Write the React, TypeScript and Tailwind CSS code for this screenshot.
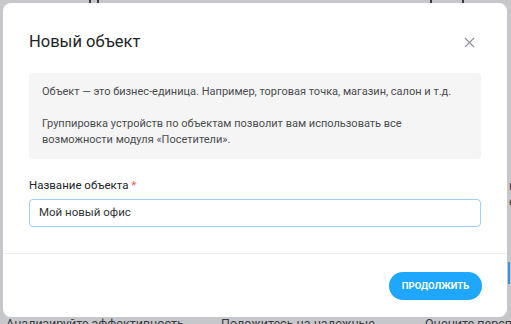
import { X } from "lucide-react";

export default function App() {
  return (
    <div
      className="relative w-[511px] h-[324px] overflow-hidden bg-[#c6c7cb]"
      style={{ fontFamily: "Roboto, 'Noto Sans', sans-serif" }}
    >
      {/* page behind the dimmed overlay */}
      <div className="absolute left-[89px] top-0 w-[2px] h-[4px] bg-[#3a3b3e]" />
      <div className="absolute left-[97px] top-0 w-[2px] h-[4px] bg-[#3a3b3e]" />
      <div className="absolute left-[430px] top-0 w-[2px] h-[4px] bg-[#3a3b3e]" />
      <div className="absolute left-[462px] top-0 w-[2px] h-[4px] bg-[#3a3b3e]" />
      <div className="absolute left-[509px] top-[178px] text-[12px] leading-[16px] text-[#3a3b3e]">
        н<br />е
      </div>
      <div className="absolute left-[508px] top-[262px] w-[6px] h-[22px] border-l-2 border-[#3d8fd6]" />
      <div className="absolute top-[316px] left-0 w-full text-[12.5px] leading-[16px] text-[#3a3b3e] whitespace-nowrap">
        <span className="absolute left-[6px]">Анализируйте эффективность</span>
        <span className="absolute left-[221px]">Положитесь на надежные</span>
        <span className="absolute left-[425px]">Оцените перспек</span>
      </div>

      {/* dialog */}
      <div className="absolute left-[3px] top-[3px] w-[504px] h-[314px] bg-white rounded-[8px] flex flex-col">
        <div className="flex items-center justify-between pl-[26px] pr-[29px] pt-[27px]">
          <h2 className="text-[16.5px] leading-[24px] font-normal text-[#222428]">Новый объект</h2>
          <X className="w-[17px] h-[17px] text-[#8b9099]" strokeWidth={1.5} />
        </div>

        <div className="mx-[26px] mt-[19px] rounded-[4px] bg-[#f5f5f5] px-[13px] py-[11px] text-[11px] leading-[16px] text-[#4a4c50]">
          Объект — это бизнес-единица. Например, торговая точка, магазин, салон и т.д.
          <br />
          <br />
          Группировка устройств по объектам позволит вам использовать все
          <br />
          возможности модуля «Посетители».
        </div>

        <div className="mx-[26px] mt-[18px] text-[11.5px] leading-[16px] text-[#222428]">
          Название объекта <span className="text-[#f0564c]">*</span>
        </div>
        <div className="mx-[26px] mt-[6px] h-[28px] rounded-[4px] border border-[#9fcdf5] flex items-center px-[9px] text-[11.5px] text-[#333538]">
          Мой новый офис
        </div>

        <div className="mt-[26px] border-t border-[#eeeeee]" />

        <div className="flex justify-end pr-[25px] pt-[18px]">
          <button className="h-[28px] w-[93px] rounded-full bg-[#1ea7fd] text-white text-[9.5px] font-bold">
            ПРОДОЛЖИТЬ
          </button>
        </div>
      </div>
    </div>
  );
}
